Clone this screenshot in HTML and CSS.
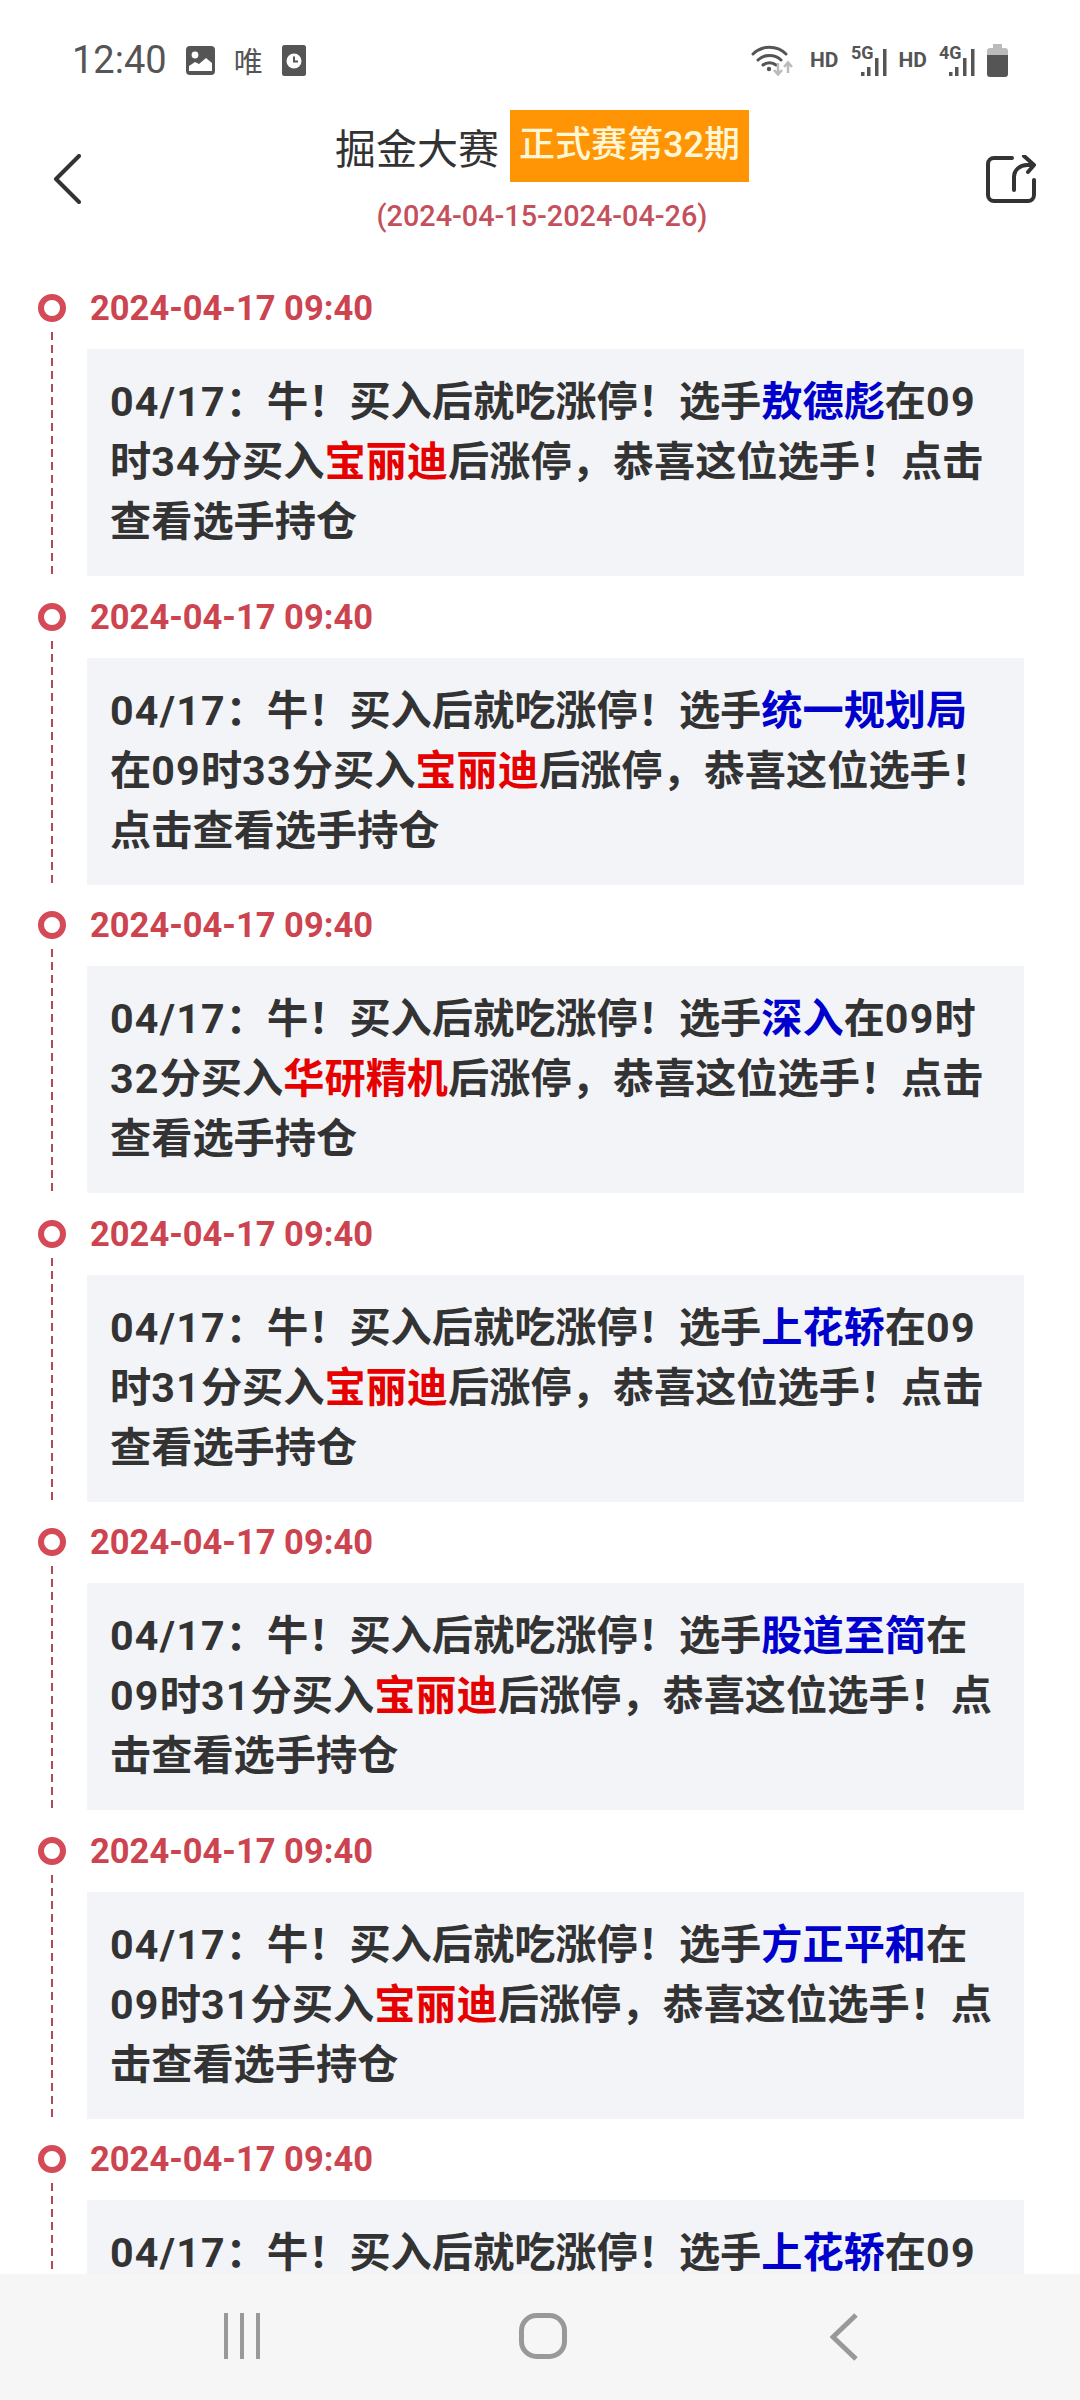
FILE: index.html
```html
<!DOCTYPE html>
<html lang="zh-CN">
<head>
    <meta charset="UTF-8">
    <meta name="viewport" content="width=device-width, initial-scale=1.0">
    <title>掘金大赛</title>
    <link rel="stylesheet" href="styles.css">
</head>
<body>
    <div class="status-bar">
        <div class="status-left">
            <span class="time">12:40</span>
            <svg width="29" height="29" viewBox="0 0 29 29"><rect width="29" height="29" rx="4" fill="#555"/><circle cx="9" cy="9" r="3.4" fill="#fff"/><path d="M3 25v-5l6-4 4 2 7-6 6 5v8z" fill="#fff"/></svg>
            <span class="wei">唯</span>
            <svg width="24" height="31" viewBox="0 0 24 31"><rect width="24" height="31" rx="2.5" fill="#555"/><circle cx="12" cy="16" r="7.5" fill="#fff"/><path d="M12 11.500v5h4" fill="none" stroke="#555" stroke-width="2"/></svg>
        </div>
        <div class="status-right">
            <svg class="wifi" width="42" height="32" viewBox="0 0 42 32" fill="none">
                <path d="M2 10C11 1 26 1 35 10M7 16c6-6 17-6 23 0M12 21c3.500-3 9.500-3 13 0" stroke="#555" stroke-width="3" stroke-linecap="round"/>
                <circle cx="18" cy="25" r="2.200" fill="#555"/>
                <path d="M27 19v11M23 26l4 4.500 4-4.500M37 29V19M33 23l4-4.500 4 4.500" stroke="#bbb" stroke-width="2.500"/>
            </svg>
            <span class="hd">HD</span>
            <svg class="net-icon" width="36" height="32" viewBox="0 0 36 32"><text class="net" x="0" y="15">5G</text><path d="M10 28h3.500v4H10zM16 23h3.500v9H16zM24 14h3.500v18H24zM32 5h3.500v27H32z" fill="#555"/></svg>
            <span class="hd">HD</span>
            <svg class="net-icon" width="36" height="32" viewBox="0 0 36 32"><text class="net" x="0" y="15">4G</text><path d="M10 28h3.500v4H10zM16 23h3.500v9H16zM24 14h3.500v18H24zM32 5h3.500v27H32z" fill="#555"/></svg>
            <svg width="21" height="33" viewBox="0 0 21 33"><path d="M6 0h9v4h3a3 3 0 0 1 3 3v4H0V7a3 3 0 0 1 3-3h3z" fill="#bbb"/><path d="M0 11h21v19a3 3 0 0 1-3 3H3a3 3 0 0 1-3-3z" fill="#555"/></svg>
        </div>
    </div>

    <div class="header">
        <svg class="back" width="28" height="50" viewBox="0 0 28 50" fill="none"><path d="M26 2L3 25l23 23" stroke="#333" stroke-width="4" stroke-linecap="round" stroke-linejoin="round"/></svg>
        <div class="header-center">
            <div class="title-row">
                <span class="title">掘金大赛</span>
                <span class="badge">正式赛第32期</span>
            </div>
            <div class="period">(2024-04-15-2024-04-26)</div>
        </div>
        <svg class="share" width="50" height="48" viewBox="0 0 50 48" fill="none"><path d="M26 3H8a6 6 0 0 0-6 6v31a6 6 0 0 0 6 6h34a6 6 0 0 0 6-6V25M28 35V22c0-7 6-12 13-12h7M38 1l10 9-6 7" stroke="#333" stroke-width="4" stroke-linecap="round" stroke-linejoin="round"/></svg>
    </div>

    <div class="timeline">
        <div class="item">
            <div class="axis"><span class="ring"></span><span class="dash"></span></div>
            <div class="date">2024-04-17 09:40</div>
            <div class="card"><span class="num">04/17</span>&#xFF1A;牛&#xFF01;买入后就吃涨停&#xFF01;选手<span class="player">敖德彪</span>在<span class="num">09</span>时<span class="num">34</span>分买入<span class="stock">宝丽迪</span>后涨停&#xFF0C;恭喜这位选手&#xFF01;点击查看选手持仓</div>
        </div>
        <div class="item">
            <div class="axis"><span class="ring"></span><span class="dash"></span></div>
            <div class="date">2024-04-17 09:40</div>
            <div class="card"><span class="num">04/17</span>&#xFF1A;牛&#xFF01;买入后就吃涨停&#xFF01;选手<span class="player">统一规划局</span>在<span class="num">09</span>时<span class="num">33</span>分买入<span class="stock">宝丽迪</span>后涨停&#xFF0C;恭喜这位选手&#xFF01;点击查看选手持仓</div>
        </div>
        <div class="item">
            <div class="axis"><span class="ring"></span><span class="dash"></span></div>
            <div class="date">2024-04-17 09:40</div>
            <div class="card"><span class="num">04/17</span>&#xFF1A;牛&#xFF01;买入后就吃涨停&#xFF01;选手<span class="player">深入</span>在<span class="num">09</span>时<span class="num">32</span>分买入<span class="stock">华研精机</span>后涨停&#xFF0C;恭喜这位选手&#xFF01;点击查看选手持仓</div>
        </div>
        <div class="item">
            <div class="axis"><span class="ring"></span><span class="dash"></span></div>
            <div class="date">2024-04-17 09:40</div>
            <div class="card"><span class="num">04/17</span>&#xFF1A;牛&#xFF01;买入后就吃涨停&#xFF01;选手<span class="player">上花轿</span>在<span class="num">09</span>时<span class="num">31</span>分买入<span class="stock">宝丽迪</span>后涨停&#xFF0C;恭喜这位选手&#xFF01;点击查看选手持仓</div>
        </div>
        <div class="item">
            <div class="axis"><span class="ring"></span><span class="dash"></span></div>
            <div class="date">2024-04-17 09:40</div>
            <div class="card"><span class="num">04/17</span>&#xFF1A;牛&#xFF01;买入后就吃涨停&#xFF01;选手<span class="player">股道至简</span>在<span class="num">09</span>时<span class="num">31</span>分买入<span class="stock">宝丽迪</span>后涨停&#xFF0C;恭喜这位选手&#xFF01;点击查看选手持仓</div>
        </div>
        <div class="item">
            <div class="axis"><span class="ring"></span><span class="dash"></span></div>
            <div class="date">2024-04-17 09:40</div>
            <div class="card"><span class="num">04/17</span>&#xFF1A;牛&#xFF01;买入后就吃涨停&#xFF01;选手<span class="player">方正平和</span>在<span class="num">09</span>时<span class="num">31</span>分买入<span class="stock">宝丽迪</span>后涨停&#xFF0C;恭喜这位选手&#xFF01;点击查看选手持仓</div>
        </div>
        <div class="item">
            <div class="axis"><span class="ring"></span><span class="dash"></span></div>
            <div class="date">2024-04-17 09:40</div>
            <div class="card"><span class="num">04/17</span>&#xFF1A;牛&#xFF01;买入后就吃涨停&#xFF01;选手<span class="player">上花轿</span>在<span class="num">09</span>时<span class="num">31</span>分买入<span class="stock">宝丽迪</span>后涨停&#xFF0C;恭喜这位选手&#xFF01;点击查看选手持仓</div>
        </div>
    </div>

    <div class="nav-bar">
        <svg width="36" height="46" viewBox="0 0 36 46"><path d="M2 0v46M18 0v46M34 0v46" stroke="#999" stroke-width="4"/></svg>
        <svg width="48" height="46" viewBox="0 0 48 46" fill="none"><rect x="2.500" y="2.500" width="43" height="41" rx="15" stroke="#999" stroke-width="5"/></svg>
        <svg width="28" height="48" viewBox="0 0 28 48" fill="none"><path d="M26 2L3 24l23 22" stroke="#999" stroke-width="5"/></svg>
    </div>
</body>
</html>
```

FILE: styles.css
```css
* {
    box-sizing: border-box;
}
html, body {
    margin: 0;
    padding: 0;
}
body {
    width: 1080px;
    height: 2400px;
    display: flex;
    flex-direction: column;
    overflow: hidden;
    background: #fff;
    color: #333;
    font-family: Roboto, "Noto Sans CJK SC", sans-serif;
}

/* status bar */
.status-bar {
    flex: none;
    height: 110px;
    padding: 10px 72px 0 72px;
    display: flex;
    justify-content: space-between;
    align-items: center;
    color: #555;
}
.status-left {
    display: flex;
    align-items: center;
    gap: 19px;
}
.status-right {
    display: flex;
    align-items: center;
    gap: 12px;
}
.time {
    font-size: 38px;
}
.wei {
    font-size: 29px;
    font-family: "Noto Sans CJK SC", sans-serif;
}
.wifi {
    margin-right: 5px;
}
.hd {
    font-size: 21px;
    font-weight: 700;
}
.net-icon {
    overflow: visible;
}
.net {
    font-size: 18px;
    font-weight: 700;
    fill: #555;
}

/* header */
.header {
    flex: none;
    padding: 0 44px 0 48px;
    display: grid;
    grid-template-columns: 1fr auto 1fr;
    align-items: center;
}
.back {
    margin: 12px 0 0 5px;
}
.share {
    margin-top: 12px;
    justify-self: end;
}
.header-center {
    text-align: center;
}
.title-row {
    height: 72px;
    display: flex;
    align-items: center;
    gap: 11px;
}
.title {
    font-size: 41px;
}
.badge {
    height: 72px;
    line-height: 70px;
    padding: 0 9px;
    background: #ff9505;
    color: #fff6d6;
    font-size: 36px;
    font-weight: 500;
}
.period {
    margin-top: 14px;
    line-height: 40px;
    font-size: 28.800px;
    font-weight: 500;
    color: #c4505c;
}

/* timeline */
.timeline {
    flex: 1;
    min-height: 0;
    overflow: hidden;
    padding: 52px 56px 0 38px;
}
.item {
    display: grid;
    grid-template-columns: 49px 1fr;
    grid-template-rows: 40px auto;
    row-gap: 21px;
    margin-bottom: 20.500px;
}
.axis {
    grid-row: 1 / 3;
    padding-top: 6px;
    display: flex;
    flex-direction: column;
}
.ring {
    flex: none;
    width: 28px;
    height: 28px;
    border: 6px solid #d44a57;
    border-radius: 50%;
}
.dash {
    flex: 1;
    width: 2px;
    margin: 10px 0 0 13px;
    background: repeating-linear-gradient(to bottom, #b04a58 0, #b04a58 8px, transparent 8px, transparent 13px);
}
.date {
    padding-left: 3px;
    line-height: 40px;
    font-size: 34.500px;
    font-weight: 700;
    color: #cc4450;
}
.card {
    grid-column: 2;
    padding: 23px 28px 24px 23px;
    background: #f2f4f8;
    line-height: 60px;
    font-size: 41.200px;
    font-weight: 700;
    color: #333;
}
.num {
    letter-spacing: 1.200px;
}
.player {
    color: #0000cc;
}
.stock {
    color: #e60000;
}

/* bottom navigation */
.nav-bar {
    flex: none;
    height: 126px;
    padding: 39px 0 0 6px;
    display: grid;
    grid-template-columns: repeat(3, 301px);
    justify-content: center;
    justify-items: center;
    align-items: start;
    background: #f6f6f6;
}
```
